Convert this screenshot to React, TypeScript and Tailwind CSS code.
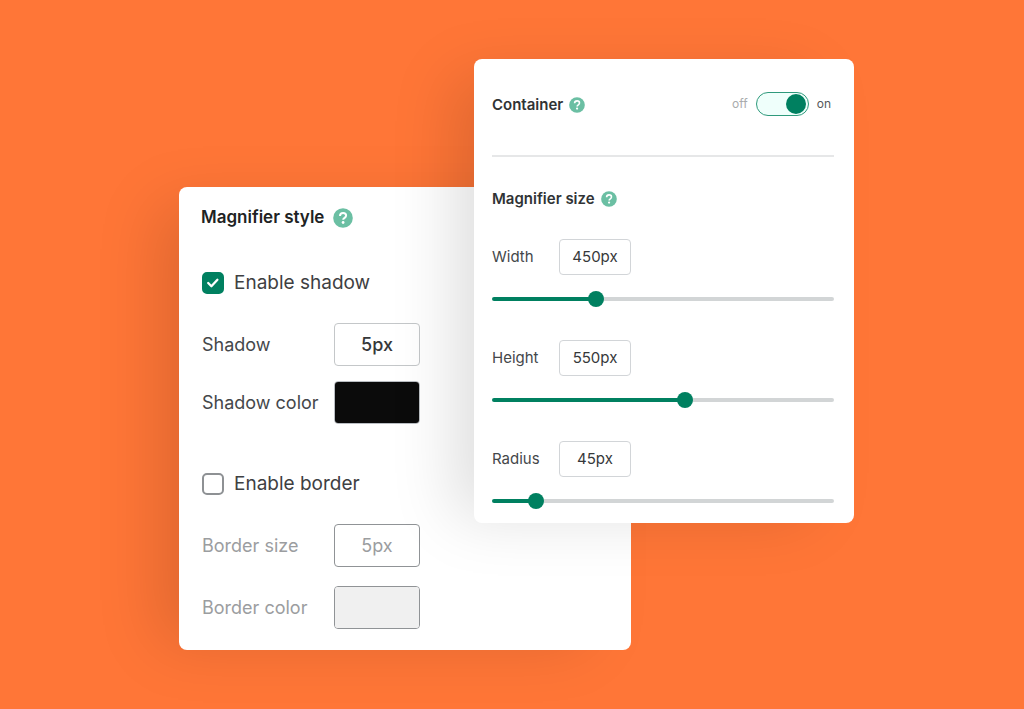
import { useState } from 'react'

interface SliderSpec {
  id: string
  label: string
  min: number
  max: number
  initial: number
}

const SLIDERS: SliderSpec[] = [
  { id: 'width', label: 'Width', min: 340, max: 712, initial: 450 },
  { id: 'height', label: 'Height', min: 340, max: 710, initial: 550 },
  { id: 'radius', label: 'Radius', min: 0, max: 410, initial: 45 },
]

function HelpIcon({ className }: { className: string }) {
  return (
    <svg viewBox="0 0 20 20" className={className} aria-hidden="true">
      <circle cx="10" cy="10" r="9.8" fill="#6bbfa3" />
      <path
        d="M7 7.9c0-1.8 1.2-3 3.1-3 1.8 0 3 1.1 3 2.6 0 1.2-.7 1.8-1.5 2.4-.9.6-1.4 1-1.4 1.9"
        fill="none"
        stroke="#fff"
        strokeWidth="2"
      />
      <circle cx="10.1" cy="14.5" r="1.4" fill="#fff" />
    </svg>
  )
}

function CheckRow({
  label,
  checked,
  onChange,
}: {
  label: string
  checked: boolean
  onChange: (v: boolean) => void
}) {
  return (
    <label className="flex h-[22px] items-center gap-[10px] text-[19px] text-[#3e4042]">
      <span className="grid size-[22px] shrink-0">
        <input
          type="checkbox"
          checked={checked}
          onChange={(e) => onChange(e.target.checked)}
          className="col-start-1 row-start-1 size-[22px] appearance-none rounded-[5px] border-2 border-[#8e9194] bg-white checked:border-[#008060] checked:bg-[#008060]"
        />
        {checked && (
          <svg viewBox="0 0 22 22" className="pointer-events-none col-start-1 row-start-1 size-[22px]">
            <path
              d="M6.2 11l3.2 3.2 6-6.4"
              fill="none"
              stroke="#fff"
              strokeWidth="2.3"
              strokeLinecap="round"
              strokeLinejoin="round"
            />
          </svg>
        )}
      </span>
      {label}
    </label>
  )
}

function SliderField({ spec }: { spec: SliderSpec }) {
  const [value, setValue] = useState(spec.initial)
  const pct = ((value - spec.min) / (spec.max - spec.min)) * 100

  return (
    <div className="flex flex-col gap-4">
      <div className="flex items-center">
        <label htmlFor={spec.id} className="w-[67px] text-[15px] text-[#44474a]">
          {spec.label}
        </label>
        <input
          id={spec.id}
          value={`${value}px`}
          onChange={(e) => setValue(parseInt(e.target.value, 10) || spec.min)}
          className="h-9 w-[72px] rounded-[4px] border border-[#d2d5d8] bg-white pb-px text-center text-[15px] text-[#36383a]"
        />
      </div>
      <input
        type="range"
        aria-label={spec.label}
        min={spec.min}
        max={spec.max}
        value={value}
        onChange={(e) => setValue(Number(e.target.value))}
        style={{
          backgroundImage: `linear-gradient(to right, #008060 ${pct}%, #d2d5d6 ${pct}%)`,
        }}
        className="my-[6px] block h-1 w-full appearance-none rounded-full [&::-webkit-slider-thumb]:size-4 [&::-webkit-slider-thumb]:appearance-none [&::-webkit-slider-thumb]:rounded-full [&::-webkit-slider-thumb]:bg-[#008060]"
      />
    </div>
  )
}

function StyleCard() {
  const [shadow, setShadow] = useState(true)
  const [border, setBorder] = useState(false)
  const [shadowSize, setShadowSize] = useState('5px')
  const [shadowColor, setShadowColor] = useState('#0b0b0b')

  return (
    <section className="col-span-2 col-start-1 row-start-1 mt-32 self-start rounded-lg bg-white px-[22px] pt-[19px] pb-[21px] shadow-[-32px_6px_60px_-12px_rgba(0,0,0,0.13)]">
      <h2 className="flex h-6 items-center gap-[9px] text-[17px] font-semibold text-[#202223]">
        Magnifier style
        <HelpIcon className="size-5" />
      </h2>

      <div className="mt-[42px] ml-px">
        <CheckRow label="Enable shadow" checked={shadow} onChange={setShadow} />
      </div>
      <div className="mt-[29px] ml-px flex flex-col gap-[15px] text-[18px] text-[#44474a]">
        <div className="flex items-center">
          <label htmlFor="shadow-size" className="w-[132px]">
            Shadow
          </label>
          <input
            id="shadow-size"
            value={shadowSize}
            onChange={(e) => setShadowSize(e.target.value)}
            className="h-[43px] w-[86px] rounded-[4px] border border-[#c4c7c9] bg-transparent text-center font-medium text-[#36383a]"
          />
        </div>
        <div className="flex items-center">
          <label htmlFor="shadow-color" className="w-[132px] whitespace-nowrap">
            Shadow color
          </label>
          <input
            id="shadow-color"
            type="color"
            value={shadowColor}
            onChange={(e) => setShadowColor(e.target.value)}
            className="h-[43px] w-[86px] appearance-none overflow-hidden rounded-[4px] border border-[#babec3] [&::-webkit-color-swatch]:border-0 [&::-webkit-color-swatch-wrapper]:p-0"
          />
        </div>
      </div>

      <div className="mt-[49px] ml-px">
        <CheckRow label="Enable border" checked={border} onChange={setBorder} />
      </div>
      <div className="mt-[29px] ml-px flex flex-col gap-[19px] text-[18px] text-[#9b9da0]">
        <div className="flex items-center">
          <label htmlFor="border-size" className="w-[132px]">
            Border size
          </label>
          <input
            id="border-size"
            defaultValue="5px"
            disabled={!border}
            className="h-[43px] w-[86px] rounded-[4px] border border-[#909396] bg-transparent text-center"
          />
        </div>
        <div className="flex items-center">
          <label htmlFor="border-color" className="w-[132px] whitespace-nowrap">
            Border color
          </label>
          <input
            id="border-color"
            type="color"
            defaultValue="#f0f0f0"
            disabled={!border}
            className="h-[43px] w-[86px] appearance-none overflow-hidden rounded-[4px] border border-[#909396] [&::-webkit-color-swatch]:border-0 [&::-webkit-color-swatch-wrapper]:p-0"
          />
        </div>
      </div>
    </section>
  )
}

function SizeCard() {
  const [on, setOn] = useState(true)

  return (
    <section className="z-10 col-span-2 col-start-2 row-start-1 self-start rounded-lg bg-white pt-[33px] pr-5 pb-[14px] pl-[18px] shadow-[-32px_6px_60px_-12px_rgba(0,0,0,0.13)]">
      <div className="flex h-6 items-center justify-between">
        <h2 className="flex items-center gap-[6px] pt-[2px] text-[15px] font-semibold text-[#303335]">
          Container
          <HelpIcon className="size-4" />
        </h2>
        <label className="mr-[3px] flex items-center gap-2 text-[12px] text-[#55585a]">
          <span className="text-[#a9abad]">off</span>
          <input
            type="checkbox"
            role="switch"
            aria-label="Container"
            checked={on}
            onChange={(e) => setOn(e.target.checked)}
            className="flex h-6 w-[53px] appearance-none items-center rounded-full border border-[#2f9a7c] bg-[#effffb] px-[2px] before:size-5 before:rounded-full before:bg-[#008060] before:content-[''] checked:justify-end"
          />
          <span>on</span>
        </label>
      </div>

      <hr className="mt-[39px] border-t-2 border-[#e6e7e8]" />

      <h2 className="mt-[30px] flex h-6 items-center gap-[6px] text-[15px] font-semibold text-[#303335]">
        Magnifier size
        <HelpIcon className="size-4" />
      </h2>
      <div className="mt-7 flex flex-col gap-[33px]">
        {SLIDERS.map((spec) => (
          <SliderField key={spec.id} spec={spec} />
        ))}
      </div>
    </section>
  )
}

export default function App() {
  return (
    <main className="flex min-h-screen items-center justify-center overflow-hidden bg-[#ff7637] pl-[9px] font-['Inter','Liberation_Sans',sans-serif]">
      {/* the two cards share the middle column, so the size card overlaps the style card */}
      <div className="grid w-full max-w-[675px] grid-cols-[295fr_157fr_223fr]">
        <StyleCard />
        <SizeCard />
      </div>
    </main>
  )
}
